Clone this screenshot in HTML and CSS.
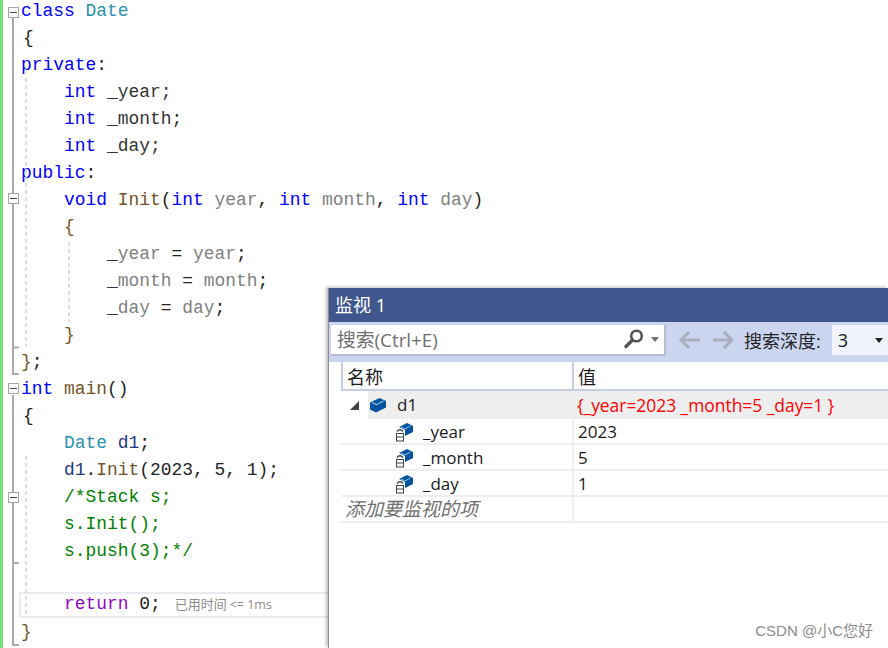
FILE: index.html
```html
<!DOCTYPE html>
<html lang="zh-CN">
<head>
<meta charset="utf-8">
<title>监视 1</title>
<link rel="stylesheet" href="styles.css">
</head>
<body>
<div class="screen">
  <div class="editor">
    <div class="change-bar"></div>
    <div class="code">
      <div class="ln"><span class="kw">class</span> <span class="ty">Date</span></div>
      <div class="ln brace-out">{</div>
      <div class="ln"><span class="kw">private</span>:</div>
      <div class="ln">    <span class="kw">int</span> <span class="dk">_year;</span></div>
      <div class="ln">    <span class="kw">int</span> <span class="dk">_month;</span></div>
      <div class="ln">    <span class="kw">int</span> <span class="dk">_day;</span></div>
      <div class="ln"><span class="kw">public</span>:</div>
      <div class="ln">    <span class="kw">void</span> <span class="fn">Init</span>(<span class="kw">int</span> <span class="pm">year</span>, <span class="kw">int</span> <span class="pm">month</span>, <span class="kw">int</span> <span class="pm">day</span>)</div>
      <div class="ln">    <span class="fn">{</span></div>
      <div class="ln">        <span class="dk">_</span><span class="pm">year</span> = <span class="pm">year</span>;</div>
      <div class="ln">        <span class="dk">_</span><span class="pm">month</span> = <span class="pm">month</span>;</div>
      <div class="ln">        <span class="dk">_</span><span class="pm">day</span> = <span class="pm">day</span>;</div>
      <div class="ln">    <span class="fn">}</span></div>
      <div class="ln"><span class="fn">}</span>;</div>
      <div class="ln"><span class="kw">int</span> <span class="fn">main</span>()</div>
      <div class="ln brace-out">{</div>
      <div class="ln">    <span class="ty">Date</span> <span class="lv">d1</span>;</div>
      <div class="ln">    <span class="lv">d1</span>.<span class="fn">Init</span>(2023, 5, 1);</div>
      <div class="ln cm">    /*Stack s;</div>
      <div class="ln cm">    s.Init();</div>
      <div class="ln cm">    s.push(3);*/</div>
      <div class="ln"> </div>
      <div class="ln current">    <span class="ctl">return</span> 0;<span class="perf">已用时间 <small>&lt;= 1ms</small></span></div>
      <div class="ln"><span class="fn">}</span></div>
    </div>
  </div>

  <svg class="gutter-art" width="330" height="648" viewBox="0 0 330 648" aria-hidden="true">
    <g fill="none" stroke="#ababab" stroke-width="2">
      <path d="M13 18V347.5H19M13 347.500V374H19"/>
      <path d="M13 395V645H19M13 563H19"/>
    </g>
    <g fill="#fff" stroke="#a5a5a5">
      <rect x="8.500" y="7.500" width="10" height="10"/>
      <rect x="8.500" y="193.500" width="10" height="10"/>
      <rect x="8.500" y="383.500" width="10" height="10"/>
      <rect x="8.500" y="492.500" width="10" height="10"/>
    </g>
    <path d="M10 12.500h7M10 198.500h7M10 388.500h7M10 497.500h7" stroke="#444"/>
    <g fill="none" stroke="#d4d4d4" stroke-width="1.500" stroke-dasharray="4 3">
      <path d="M26 78V346M26 456V615M69 242V322"/>
    </g>
  </svg>

  <section class="watch">
    <header class="watch-title">监视 1</header>
    <div class="toolbar">
      <div class="search">
        <span class="search-text">搜索(Ctrl+E)</span>
        <svg class="mag" width="22" height="20" viewBox="0 0 22 20" aria-hidden="true">
          <circle cx="13.500" cy="7" r="5.300" fill="none" stroke="#555" stroke-width="2.600"/>
          <path d="M9.500 11L3 17.500" stroke="#555" stroke-width="3.400" stroke-linecap="round"/>
        </svg>
        <span class="caret gray"></span>
      </div>
      <svg class="nav" width="56" height="22" viewBox="0 0 56 22" aria-hidden="true">
        <g fill="none" stroke="#a9afbf" stroke-width="3">
          <path d="M22 11H3M11 3l-8 8 8 8"/>
          <path d="M35 11H54M46 3l8 8-8 8"/>
        </g>
      </svg>
      <span class="depth-label">搜索深度:</span>
      <div class="depth"><span>3</span><span class="caret"></span></div>
    </div>
    <div class="grid">
      <div class="row head">
        <div class="cell name">名称</div>
        <div class="cell val">值</div>
      </div>
      <div class="row parent">
        <div class="cell name">
          <span class="twist"></span>
          <svg class="ico" width="18" height="16" viewBox="0 0 18 16" aria-hidden="true">
            <path d="M1 5.500L10.500 1 17 4v6.500L7 15.500 1 12.500z" fill="#00539c"/>
            <path d="M3 5.500l4.500 2.200L14.500 4" fill="none" stroke="#9cc3e6" stroke-width="1.200"/>
          </svg>
          <span class="sel">d1</span>
        </div>
        <div class="cell val err">{_year=2023 _month=5 _day=1 }</div>
      </div>
      <div class="row child">
        <div class="cell name">
          <svg class="ico" width="18" height="20" viewBox="0 0 18 20" aria-hidden="true">
            <path d="M4 5L12 1l6 3v6l-8 4V8z" fill="#00539c"/>
            <path d="M6 5l4 2 5.500-3" fill="none" stroke="#9cc3e6"/>
            <path d="M2 9.500Q5 6 8 9.500" fill="none" stroke="#444" stroke-width="1.500"/>
            <rect x="1.500" y="11.500" width="7" height="7.500" fill="#fff" stroke="#444"/>
            <path d="M1.500 15h7" stroke="#444"/>
          </svg>
          <span>_year</span>
        </div>
        <div class="cell val">2023</div>
      </div>
      <div class="row child">
        <div class="cell name">
          <svg class="ico" width="18" height="20" viewBox="0 0 18 20" aria-hidden="true">
            <path d="M4 5L12 1l6 3v6l-8 4V8z" fill="#00539c"/>
            <path d="M6 5l4 2 5.500-3" fill="none" stroke="#9cc3e6"/>
            <path d="M2 9.500Q5 6 8 9.500" fill="none" stroke="#444" stroke-width="1.500"/>
            <rect x="1.500" y="11.500" width="7" height="7.500" fill="#fff" stroke="#444"/>
            <path d="M1.500 15h7" stroke="#444"/>
          </svg>
          <span>_month</span>
        </div>
        <div class="cell val">5</div>
      </div>
      <div class="row child">
        <div class="cell name">
          <svg class="ico" width="18" height="20" viewBox="0 0 18 20" aria-hidden="true">
            <path d="M4 5L12 1l6 3v6l-8 4V8z" fill="#00539c"/>
            <path d="M6 5l4 2 5.500-3" fill="none" stroke="#9cc3e6"/>
            <path d="M2 9.500Q5 6 8 9.500" fill="none" stroke="#444" stroke-width="1.500"/>
            <rect x="1.500" y="11.500" width="7" height="7.500" fill="#fff" stroke="#444"/>
            <path d="M1.500 15h7" stroke="#444"/>
          </svg>
          <span>_day</span>
        </div>
        <div class="cell val">1</div>
      </div>
      <div class="row add">
        <div class="cell name">添加要监视的项</div>
        <div class="cell val"></div>
      </div>
    </div>
  </section>
  <div class="mark">CSDN @小C您好</div>
</div>
</body>
</html>
```
FILE: styles.css
```css
* { box-sizing: border-box; }
html, body { margin: 0; padding: 0; background: #fff; }
.screen {
  position: relative;
  width: 888px;
  height: 648px;
  overflow: hidden;
  background: #fff;
}
.editor { display: flex; height: 648px; }
.change-bar { width: 3px; flex: none; background: #6fe36f; }
.code {
  margin: -2px 0 0 18px;
  flex: 1;
  font: 17.92px/27px "Liberation Mono", "Noto Sans CJK SC", monospace;
  color: #222;
}
.ln { height: 27px; white-space: pre; }
.brace-out { padding-left: 2px; }
.kw { color: #0000ff; }
.ty { color: #2b91af; }
.fn { color: #74531f; }
.pm { color: #808080; }
.dk { color: #333; }
.lv { color: #1f377f; }
.cm { color: #008000; }
.ctl { color: #8f08c4; }
.current {
  margin-left: -2px;
  padding-left: 2px;
  box-shadow: inset 0 0 0 2px #eaeaf2;
  height: 26px;
  line-height: 25px;
  margin-bottom: 1px;
}
.perf {
  margin-left: 14px;
  font: 13px "Noto Sans CJK SC", sans-serif;
  color: #8c8c8c;
}
.perf small { font: 12.500px "Open Sans", sans-serif; }
.gutter-art { position: absolute; left: 0; top: 0; pointer-events: none; }

.watch {
  position: absolute;
  left: 328px;
  top: 288px;
  width: 560px;
  height: 360px;
  background: #fff;
  border-left: 1px solid #8d8d8d;
  box-shadow: -2px -1px 3px rgba(0, 0, 0, .25);
  font-family: "Open Sans", "Noto Sans CJK SC", sans-serif;
  color: #1a1a1a;
}
.watch-title {
  height: 34px;
  padding-left: 6px;
  background: #3f578d;
  color: #fff;
  font-size: 18px;
  line-height: 34px;
}
.toolbar {
  height: 40px;
  display: flex;
  align-items: center;
  padding: 0 0 4px 2px;
  background: #ccd5f0;
}
.search {
  width: 335px;
  height: 31px;
  display: flex;
  align-items: center;
  padding-left: 6px;
  background: #fff;
  border: solid #b4bcce;
  border-width: 0 2px 2px 0;
}
.search-text { flex: 1; font-size: 18.800px; color: #6f6f6f; }
.mag { margin-right: 6px; }
.caret {
  width: 0;
  height: 0;
  border: solid transparent;
  border-width: 5px 4.500px 0;
  border-top-color: #222;
}
.caret.gray { border-top-color: #6f6f6f; margin-right: 5px; }
.nav { margin-left: 12px; }
.depth-label { margin-left: 10px; font-size: 18px; color: #222; white-space: nowrap; }
.depth {
  margin-left: 11px;
  flex: 1;
  height: 30px;
  display: flex;
  align-items: center;
  justify-content: space-between;
  padding: 0 5px 0 6px;
  background: #f1f4fc;
  font-size: 18px;
}
.grid { font-size: 17px; }
.row {
  display: grid;
  grid-template-columns: 231px 1fr;
  height: 26px;
  margin-left: 12px;
  border-bottom: 2px solid #eeeeee;
}
.cell {
  display: flex;
  align-items: center;
  white-space: nowrap;
  padding-left: 5px;
  line-height: 24px;
}
.val { padding-left: 4px; border-left: 2px solid #eee; }
.head {
  height: 29px;
  border-bottom: 2px solid #c6cfe2;
  font-size: 18px;
}
.head .cell { padding-top: 2px; }
.head .name { border-left: 2px solid #c6cfea; padding-left: 4px; }
.head .val { border-left: 2px solid #c6cfea; }
.parent {
  height: 28px;
  border-bottom: 0;
  background: linear-gradient(to right, #fff 27px, #eeeeee 27px);
}
.parent .val { border-left: 0; padding-left: 5px; color: #ff0000; font-size: 17.400px; }
.twist {
  width: 0;
  height: 0;
  margin-left: 4px;
  border: solid transparent;
  border-width: 0 0 9px 9px;
  border-bottom-color: #444;
}
.parent .ico { margin-left: 10px; }
.sel { margin-left: 10px; }
.child .cell { padding-top: 1px; }
.child .ico { margin-left: 49px; }
.child .ico + span { margin-left: 10px; }
.add .name { font-style: italic; color: #6f6f6f; font-size: 19px; padding-left: 4px; }
.mark {
  position: absolute;
  right: 15px;
  bottom: 8px;
  font: 15px "Liberation Sans", "Noto Sans CJK SC", sans-serif;
  color: #8b8b8b;
}
```
